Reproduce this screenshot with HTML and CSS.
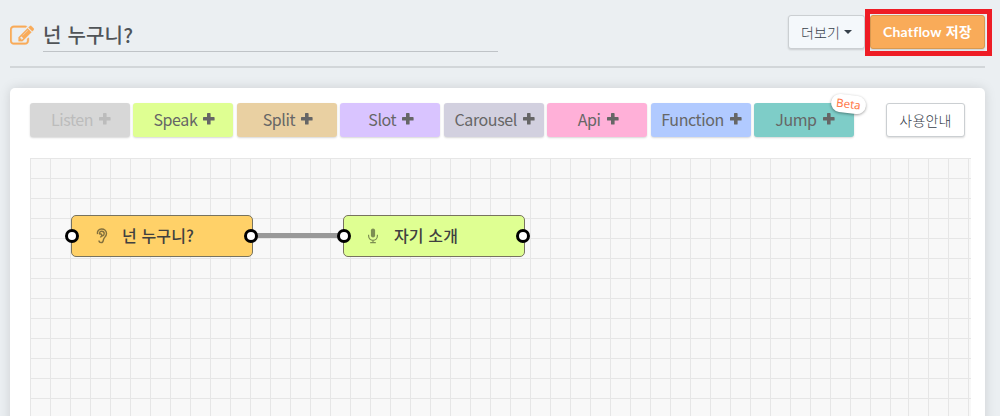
FILE: index.html
```html
<!DOCTYPE html>
<html lang="ko">
<head>
<meta charset="utf-8">
<title>Chatflow</title>
<link rel="stylesheet" href="styles.css">
</head>
<body>
<svg class="defs" width="0" height="0"><symbol id="plus" viewBox="0 0 12 12"><path d="M4.700 0h2.200q.7 0 .7.7v3.300h3.300q.7 0 .7.7v2.200q0 .7-.7.7H7.600v3.300q0 .7-.7.7H4.700q-.7 0-.7-.7V7.600H.7Q0 7.600 0 6.900V4.700q0-.7.7-.7H4V.7q0-.7.7-.7z"/></symbol></svg>
<header class="header">
  <svg class="edit-icon" viewBox="0 0 1792 1792"><path d="M888 1184l116-116-152-152-116 116v56h96v96h56zm440-720q-16-16-33 1l-350 350q-17 17-1 33t33-1l350-350q17-17 1-33zm80 594v190q0 119-84.500 203.500t-203.500 84.500h-832q-119 0-203.500-84.500t-84.500-203.500v-832q0-119 84.500-203.500t203.500-84.500h832q63 0 117 25 15 7 18 23 3 17-9 29l-49 49q-14 14-32 8-23-6-45-6h-832q-66 0-113 47t-47 113v832q0 66 47 113t113 47h832q66 0 113-47t47-113v-126q0-13 9-22l64-64q15-15 35-7t20 29zm-96-738l288 288-672 672h-288v-288zm444 132l-92 92-288-288 92-92q28-28 68-28t68 28l152 152q28 28 28 68t-28 68z"/></svg>
  <div class="title"><span>넌 누구니?</span></div>
  <div class="actions">
    <div class="btn more"><span>더보기</span><i class="caret"></i></div>
    <div class="btn save"><span><b>Chatflow</b> 저장</span><i class="highlight"></i></div>
  </div>
</header>
<main class="panel">
  <div class="toolbar">
    <div class="tool listen"><span>Listen</span><svg class="plus"><use href="#plus"/></svg></div>
    <div class="tool speak"><span>Speak</span><svg class="plus"><use href="#plus"/></svg></div>
    <div class="tool split"><span>Split</span><svg class="plus"><use href="#plus"/></svg></div>
    <div class="tool slot"><span>Slot</span><svg class="plus"><use href="#plus"/></svg></div>
    <div class="tool carousel"><span>Carousel</span><svg class="plus"><use href="#plus"/></svg></div>
    <div class="tool api"><span>Api</span><svg class="plus"><use href="#plus"/></svg></div>
    <div class="tool function"><span>Function</span><svg class="plus"><use href="#plus"/></svg></div>
    <div class="tool jump"><span>Jump</span><svg class="plus"><use href="#plus"/></svg><em class="beta">Beta</em></div>
    <div class="btn guide"><span>사용안내</span></div>
  </div>
  <div class="canvas">
    <div class="grid grid-main"></div>
    <div class="grid grid-rest"></div>
    <div class="link"></div>
    <div class="node node-listen">
      <i class="port in"></i>
      <svg class="node-icon" viewBox="0 0 12 16"><path d="M1.500 6.200C.9 3.200 2.700 1 5.600 1c2.800 0 4.900 1.900 4.900 4.500 0 3.200-2.700 3.700-3 6.100-.2 1.800-.9 3-2.400 3-1.300 0-2.100-.8-2.100-2.100M3.600 6.300c-.4-1.800.5-3 2-3s2.600.9 2.600 2.400c0 1.400-1 2-1.900 2.400M3.500 6.200c1.500-.7 2.600.1 2.300 1.300-.2.900-1.100 1-1.300 2"/></svg>
      <span>넌 누구니?</span>
      <i class="port out"></i>
    </div>
    <div class="node node-speak">
      <i class="port in"></i>
      <svg class="node-icon mic" viewBox="0 0 12 16"><rect x="2.900" y=".4" width="4.200" height="9.200" rx="2.100"/><path d="M.6 6.800v1.300a4.400 4.200 0 0 0 8.800 0V6.800M5 12.300v2.300M2.200 14.600h5.600"/></svg>
      <span>자기 소개</span>
      <i class="port out"></i>
    </div>
  </div>
</main>
</body>
</html>
```
FILE: styles.css
```css
* { box-sizing: border-box; }
body {
  margin: 0;
  height: 416px;
  overflow: hidden;
  background: #ebeff2;
  font-family: "Noto Sans CJK KR", sans-serif;
  color: #505458;
}
.defs { position: absolute; }
.header {
  display: flex;
  align-items: flex-start;
  height: 68px;
  margin: 0 15px 0 10px;
  padding-top: 15px;
  border-bottom: 2px solid #d2d6d9;
}
.edit-icon { width: 24px; height: 24px; margin-top: 9px; fill: #f9ab59; stroke: #f9ab59; stroke-width: 24; }
.title {
  width: 455px;
  height: 37px;
  margin-left: 9px;
  border-bottom: 1px solid #bfc3c7;
  font-size: 20px;
  font-weight: 500;
  line-height: 40px;
  letter-spacing: .2px;
  white-space: nowrap;
}
.actions { display: flex; gap: 5px; margin-left: auto; }
.btn {
  display: flex;
  align-items: center;
  justify-content: center;
  height: 34px;
  padding-bottom: 1px;
  border: 1px solid #cbcfd2;
  border-radius: 3px;
  box-shadow: 0 1px 2px rgba(0, 0, 0, .14);
  font-size: 14px;
  font-weight: 300;
  line-height: 20px;
  letter-spacing: .2px;
  white-space: nowrap;
  color: #36404a;
}
.more { width: 77px; background: #f4f8fb; gap: 4px; }
.caret { border: 4px solid transparent; border-top-color: #36404a; border-bottom: 0; }
.save {
  position: relative;
  width: 115px;
  border-color: #d9994f;
  background: #f9ab59;
  color: #fff;
  font-weight: 700;
}
.save b { font-family: Lato, sans-serif; font-weight: 700; }
.highlight { position: absolute; inset: -7px -8px -8px -6px; border: 5px solid #ee1c25; }
.panel {
  height: 348px;
  margin: 20px 15px 0 10px;
  padding: 15px 14px 0 20px;
  border-radius: 5px;
  background: #fff;
  box-shadow: 0 0 12px rgba(0, 0, 0, .13);
}
.toolbar { display: flex; gap: 3.430px; height: 34px; }
.tool {
  position: relative;
  display: flex;
  align-items: center;
  justify-content: center;
  gap: 6px;
  width: 100px;
  height: 34px;
  padding: 0 0 2px 2px;
  border-radius: 3px;
  box-shadow: 0 1px 2px rgba(0, 0, 0, .16);
  font-size: 16px;
  line-height: 24px;
  letter-spacing: -.4px;
  color: #666;
}
.plus { width: 12px; height: 12px; fill: #666; }
.listen { background: #d7d7d7; color: #bcbcbc; }
.listen .plus { fill: #bcbcbc; }
.speak { background: #dfff92; }
.split { background: #e9d0a2; }
.slot { background: #d9c4ff; }
.carousel { background: #d2d0df; }
.api { background: #ffb0d8; }
.function { background: #b1caff; }
.jump { background: #7ecdc8; }
.beta {
  position: absolute;
  left: 77px;
  top: -8px;
  width: 35px;
  height: 18px;
  border-radius: 9px;
  background: #fff;
  box-shadow: 0 1px 3px rgba(0, 0, 0, .4);
  color: #ff7849;
  font: 11.500px/18px "Noto Sans", sans-serif;
  letter-spacing: 0;
  text-align: center;
  transform: rotate(7deg);
}
.guide { width: 79px; margin: 0 6px 0 auto; background: #fff; }
.canvas { position: relative; display: flex; width: 941px; height: 278px; margin-top: 21px; }
.grid {
  background:
    linear-gradient(#e6e6e6 1px, transparent 1px) 0 0 / 20px 20px,
    linear-gradient(90deg, #e6e6e6 1px, transparent 1px) 0 0 / 20px 20px,
    #f8f8f8;
}
.grid-main { width: 878px; }
.grid-rest { width: 63px; }
.link { position: absolute; left: 221px; top: 75px; width: 93px; height: 5px; background: #999; }
.node {
  position: absolute;
  top: 57px;
  display: flex;
  align-items: center;
  width: 182px;
  height: 42px;
  padding: 0 0 2px 24px;
  border: 1px solid #77735f;
  border-radius: 5px;
  font-size: 16px;
  font-weight: 500;
  line-height: 24px;
  letter-spacing: .15px;
  color: #404040;
}
.node-listen { left: 41px; background: #ffd168; }
.node-speak { left: 313px; background: #dfff92; }
.node-icon { width: 12px; height: 16px; margin: 1px 14px 0 0; fill: none; stroke: #83703d; stroke-width: 1.400; }
.mic { stroke: #7c8e52; stroke-width: 1.200; }
.mic rect { fill: #7c8e52; stroke: none; }
.port {
  position: absolute;
  top: 13px;
  width: 14px;
  height: 14px;
  border: 3px solid #000;
  border-radius: 50%;
  background: #fff;
}
.in { left: -7px; }
.out { right: -6px; }
```
